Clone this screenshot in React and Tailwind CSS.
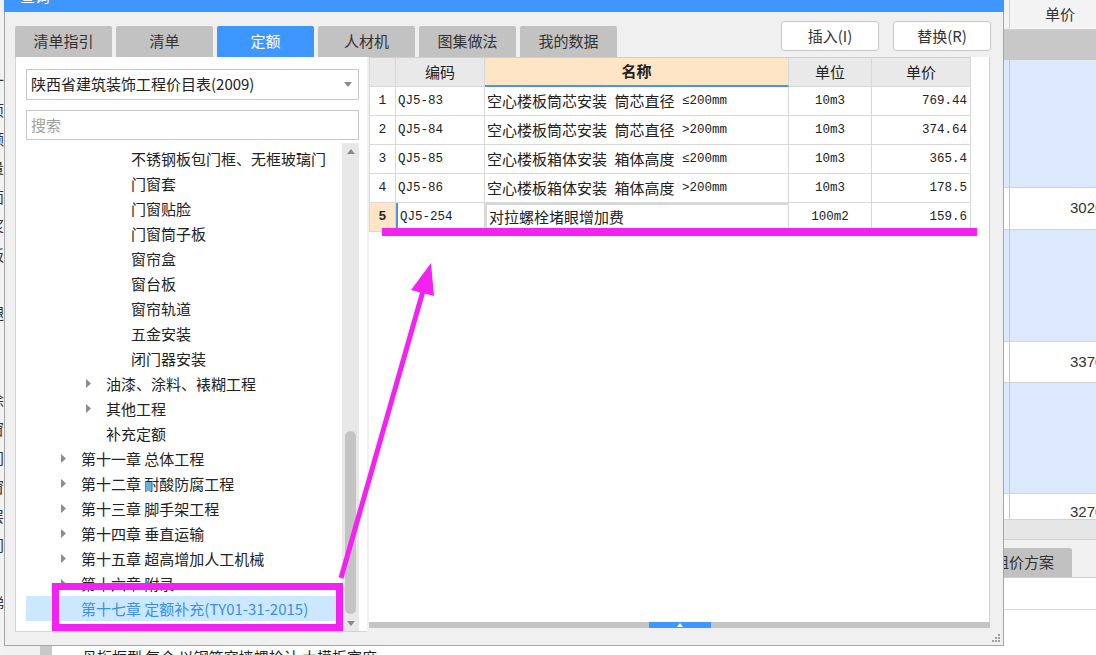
import React from 'react';

const tabs = ['清单指引', '清单', '定额', '人材机', '图集做法', '我的数据'];

const tree = [
  { text: '不锈钢板包门框、无框玻璃门', level: 3 },
  { text: '门窗套', level: 3 },
  { text: '门窗贴脸', level: 3 },
  { text: '门窗筒子板', level: 3 },
  { text: '窗帘盒', level: 3 },
  { text: '窗台板', level: 3 },
  { text: '窗帘轨道', level: 3 },
  { text: '五金安装', level: 3 },
  { text: '闭门器安装', level: 3 },
  { text: '油漆、涂料、裱糊工程', level: 2, arrow: true },
  { text: '其他工程', level: 2, arrow: true },
  { text: '补充定额', level: 2 },
  { text: '第十一章 总体工程', level: 1, arrow: true },
  { text: '第十二章 耐酸防腐工程', level: 1, arrow: true },
  { text: '第十三章 脚手架工程', level: 1, arrow: true },
  { text: '第十四章 垂直运输', level: 1, arrow: true },
  { text: '第十五章 超高增加人工机械', level: 1, arrow: true },
  { text: '第十六章 附录', level: 1, arrow: true },
  { text: '第十七章 定额补充(TY01-31-2015)', level: 1, selected: true },
];

const indent = { 1: 'pl-[35px]', 2: 'pl-[60px]', 3: 'pl-[85px]' };

const rows = [
  { no: '1', code: 'QJ5-83', name: '空心楼板筒芯安装 筒芯直径 ≤200mm', unit: '10m3', price: '769.44' },
  { no: '2', code: 'QJ5-84', name: '空心楼板筒芯安装 筒芯直径 >200mm', unit: '10m3', price: '374.64' },
  { no: '3', code: 'QJ5-85', name: '空心楼板箱体安装 箱体高度 ≤200mm', unit: '10m3', price: '365.4' },
  { no: '4', code: 'QJ5-86', name: '空心楼板箱体安装 箱体高度 >200mm', unit: '10m3', price: '178.5' },
  { no: '5', code: 'QJ5-254', name: '对拉螺栓堵眼增加费', unit: '100m2', price: '159.6', active: true },
];

const bgRows = [
  { h: 'h-[128px]', blue: true },
  { h: 'h-[42px]', v: '3026' },
  { h: 'h-[112px]', blue: true },
  { h: 'h-[41px]', v: '3370' },
  { h: 'h-[111px]', blue: true },
  { h: 'h-[26px]', v: '3270', top: true },
];

const sliver = ['计', '项', '额', '量', '面', '浆', '板', '', '腿', '', '', '涂', '窗', '门', '窗', '层', '门', '', '梯'];

// ascii runs are drawn in a mono face, like the SimSun half-width glyphs
function MixedText({ text }) {
  const parts = text.split(/([\x20-\x7E≤]+)/).filter(Boolean);
  return (
    <>
      {parts.map((p, i) =>
        /[\x20-\x7E≤]/.test(p) ? (
          <span key={i} className="font-['Liberation_Mono','DejaVu_Sans_Mono',monospace] text-[12.5px] whitespace-pre">
            {p}
          </span>
        ) : (
          <span key={i}>{p}</span>
        )
      )}
    </>
  );
}

function Caret({ up }) {
  return (
    <svg width="8" height="5" viewBox="0 0 8 5">
      <path d={up ? 'M0 5 L4 0 L8 5 Z' : 'M0 0 L8 0 L4 5 Z'} fill="#8a8a8a" />
    </svg>
  );
}

function LeftPanel() {
  return (
    <div className="w-[352px] shrink-0 h-full bg-white border-l border-b border-[#d4d4d4] flex flex-col pl-[10px] pr-[8px] pt-[12px]">
      <div className="h-[31px] border border-[#c8c8c8] bg-white flex items-center justify-between pl-[4px] pr-[6px] text-[15px] text-[#222]">
        <span>陕西省建筑装饰工程价目表(2009)</span>
        <Caret />
      </div>
      <div className="mt-[10px] h-[30px] border border-[#c8c8c8] bg-white flex items-center pl-[4px] text-[15px] text-[#a0a0a0]">
        搜索
      </div>
      <div className="mt-[3px] flex-1 flex min-h-0">
        <div className="flex-1 pt-[3px] overflow-hidden">
          {tree.map((n, i) => (
            <div
              key={i}
              className={`h-[25px] flex items-center whitespace-nowrap text-[15px] ${indent[n.level]} ${
                n.selected ? 'bg-[#cce8ff] text-[#3a8ee6]' : 'text-[#222]'
              }`}
            >
              <span className="w-[20px] flex items-center">
                {n.arrow && (
                  <svg width="5" height="9" viewBox="0 0 5 9">
                    <path d="M0 0 L5 4.5 L0 9 Z" fill="#8c8c8c" />
                  </svg>
                )}
              </span>
              <span className="leading-[25px]">{n.text}</span>
            </div>
          ))}
        </div>
        <div className="w-[17px] bg-[#e8e8e8] flex flex-col items-center pt-[6px] pb-[5px]">
          <Caret up />
          <div className="flex-1" />
          <div className="w-[11px] h-[183px] rounded-[6px] bg-[#c4c4c4]" />
          <div className="mt-[7px]">
            <Caret />
          </div>
        </div>
      </div>
    </div>
  );
}

function Table() {
  const cell = 'h-[29px] border-r border-b border-[#d8d8d8] flex items-center';
  return (
    <div className="border-t border-[#d0d0d0] grid grid-cols-[27px_89px_304px_83px_99px] w-[602px] text-[#222]">
      <div className={`${cell} bg-[#e9e9e9] border-l`} />
      <div className={`${cell} bg-[#e9e9e9] justify-center text-[15px]`}>编码</div>
      <div className={`${cell} bg-[#fde5c6] justify-center text-[15px] font-semibold border-b-2 border-b-[#4a94e6]`}>名称</div>
      <div className={`${cell} bg-[#e9e9e9] justify-center text-[15px]`}>单位</div>
      <div className={`${cell} bg-[#e9e9e9] justify-center text-[15px]`}>单价</div>
      {rows.map((r) => (
        <React.Fragment key={r.no}>
          <div
            className={`${cell} border-l justify-center font-['Liberation_Mono',monospace] text-[13px] ${
              r.active ? 'bg-[#fde5c6] font-bold' : 'bg-white'
            }`}
          >
            {r.no}
          </div>
          <div
            className={`${cell} pl-[2px] font-['Liberation_Mono',monospace] text-[12.5px] ${
              r.active ? 'border-l-2 border-l-[#4a94e6]' : ''
            }`}
          >
            {r.code}
          </div>
          <div
            className={`${cell} pl-[2px] text-[15px] whitespace-nowrap ${
              r.active ? 'border-2 border-[#4a94e6] pb-[2px]' : ''
            }`}
          >
            <MixedText text={r.name} />
          </div>
          <div className={`${cell} justify-center font-['Liberation_Mono',monospace] text-[12.5px]`}>{r.unit}</div>
          <div className={`${cell} justify-end pr-[3px] font-['Liberation_Mono',monospace] text-[12.5px]`}>{r.price}</div>
        </React.Fragment>
      ))}
    </div>
  );
}

function Dialog() {
  return (
    <div className="h-[646px] flex flex-col">
      <div className="h-[12px] bg-[#3e97ff] overflow-hidden pl-[16px]">
        <div className="mt-[-14px] text-[15px] leading-[20px] text-white">查询</div>
      </div>
      <div className="flex-1 bg-[#f0f0f0] border-x border-b border-[#a6a6a6] flex flex-col">
        <div className="h-[45px] flex items-end pl-[10px] pr-[12px]">
          <div className="flex gap-[4px]">
            {tabs.map((t) => (
              <div
                key={t}
                className={`w-[97px] h-[31px] rounded-t-[2px] flex items-center justify-center text-[15px] ${
                  t === '定额' ? 'bg-[#3e97ff] text-white' : 'bg-[#c2c2c2] text-[#333]'
                }`}
              >
                {t}
              </div>
            ))}
          </div>
          <div className="flex-1" />
          <div className="self-start mt-[9px] flex gap-[14px]">
            {['插入(I)', '替换(R)'].map((b) => (
              <div
                key={b}
                className="w-[98px] h-[30px] bg-white border border-[#c6c6c6] rounded-[3px] flex items-center justify-center text-[15px] text-[#333]"
              >
                {b}
              </div>
            ))}
          </div>
        </div>
        <div className="h-[575px] flex pl-[10px] pr-[12px]">
          <LeftPanel />
          <div className="w-[2px] shrink-0" />
          <div className="w-[621px] shrink-0 flex flex-col">
            <div className="flex-1 bg-white border-r border-[#d0d0d0]">
              <Table />
            </div>
            <div className="h-[6px] bg-[#c4c4c4] flex justify-center">
              <div className="w-[62px] h-full bg-[#3e97ff] flex items-center justify-center">
                <svg width="6" height="4" viewBox="0 0 6 4">
                  <path d="M0 4 L3 0 L6 4 Z" fill="#fff" />
                </svg>
              </div>
            </div>
            <div className="h-[4px]" />
          </div>
        </div>
        <div className="flex-1 flex justify-end items-end pr-[3px] pb-[3px]">
          <svg width="8" height="8" viewBox="0 0 8 8">
            <rect x="6" y="0" width="2" height="2" fill="#a0a0a0" />
            <rect x="3" y="3" width="2" height="2" fill="#a0a0a0" />
            <rect x="6" y="3" width="2" height="2" fill="#a0a0a0" />
            <rect x="0" y="6" width="2" height="2" fill="#a0a0a0" />
            <rect x="3" y="6" width="2" height="2" fill="#a0a0a0" />
            <rect x="6" y="6" width="2" height="2" fill="#a0a0a0" />
          </svg>
        </div>
      </div>
    </div>
  );
}

function BackgroundRight() {
  return (
    <div className="flex-1 min-w-0 overflow-hidden flex flex-col text-[15px] text-[#333]">
      <div className="h-[30px] shrink-0 bg-[#f3f3f3] border-b border-[#d0d0d0] flex">
        <div className="w-[6px] border-r border-[#d0d0d0]" />
        <div className="flex items-center pl-[35px]">单价</div>
      </div>
      <div className="h-[30px] shrink-0 bg-[#c8c8c8]" />
      {bgRows.map((r, i) => (
        <div key={i} className={`${r.h} shrink-0 flex border-b border-[#d2d2d2] ${r.blue ? 'bg-[#dce8fb]' : 'bg-white'}`}>
          <div className="w-[6px] shrink-0 border-r border-[#c4c4c4]" />
          {r.v && (
            <div
              className={`pl-[60px] font-['Liberation_Sans',sans-serif] whitespace-nowrap ${
                r.top ? 'pt-[9px] leading-[17px]' : 'flex items-center'
              }`}
            >
              {r.v}0.00
            </div>
          )}
        </div>
      ))}
      <div className="h-[20px] shrink-0 bg-[#e6e6e6] border-b border-[#cfcfcf]" />
      <div className="h-[38px] shrink-0 bg-[#f0f0f0] flex items-end border-b border-[#cfcfcf]">
        <div className="w-[68px] h-[29px] bg-[#c1c1c1] rounded-tr-[2px] overflow-hidden flex items-center">
          <span className="ml-[-10px] whitespace-nowrap">组价方案</span>
        </div>
      </div>
      <div className="h-[32px] shrink-0 bg-white border-b border-[#d6d6d6]" />
      <div className="flex-1 bg-white" />
    </div>
  );
}

export default function App() {
  return (
    <div className="relative w-[1096px] h-[655px] overflow-hidden flex bg-white font-['Noto_Sans_CJK_SC',sans-serif]">
      <div className="w-[4px] shrink-0 h-full bg-[#f2f2f2] overflow-hidden">
        <div className="ml-[-11px] pt-[66px] text-[15px] text-[#333]">
          {sliver.map((c, i) => (
            <div key={i} className="h-[29px] leading-[29px]">
              {c}
            </div>
          ))}
        </div>
      </div>
      <div className="w-[1000px] shrink-0 flex flex-col">
        <Dialog />
        <div className="flex-1 flex overflow-hidden">
          <div className="w-[36px] bg-[#f0f0f0]" />
          <div className="w-[12px] bg-[#c8c8c8]" />
          <div className="flex-1 bg-white pl-[30px] overflow-hidden">
            <div className="mt-[3px] text-[15px] leading-[15px] text-[#222] whitespace-nowrap">
              丹桁框型 每个 以钢筋穿墙螺栓计 大模板宽度
            </div>
          </div>
        </div>
      </div>
      <BackgroundRight />

      {/* annotation overlays */}
      <div className="absolute left-[382px] top-[228px] w-[595px] h-[8px] bg-[#f322f3]" />
      <div className="absolute left-[52px] top-[583px] w-[291px] h-[48px] border-[7px] border-[#f322f3]" />
      <svg className="absolute left-0 top-0 pointer-events-none" width="1096" height="655">
        <line x1="341" y1="578" x2="423" y2="291" stroke="#f322f3" strokeWidth="5" />
        <polygon points="431,263 411,290 434,296" fill="#f322f3" />
      </svg>
    </div>
  );
}
